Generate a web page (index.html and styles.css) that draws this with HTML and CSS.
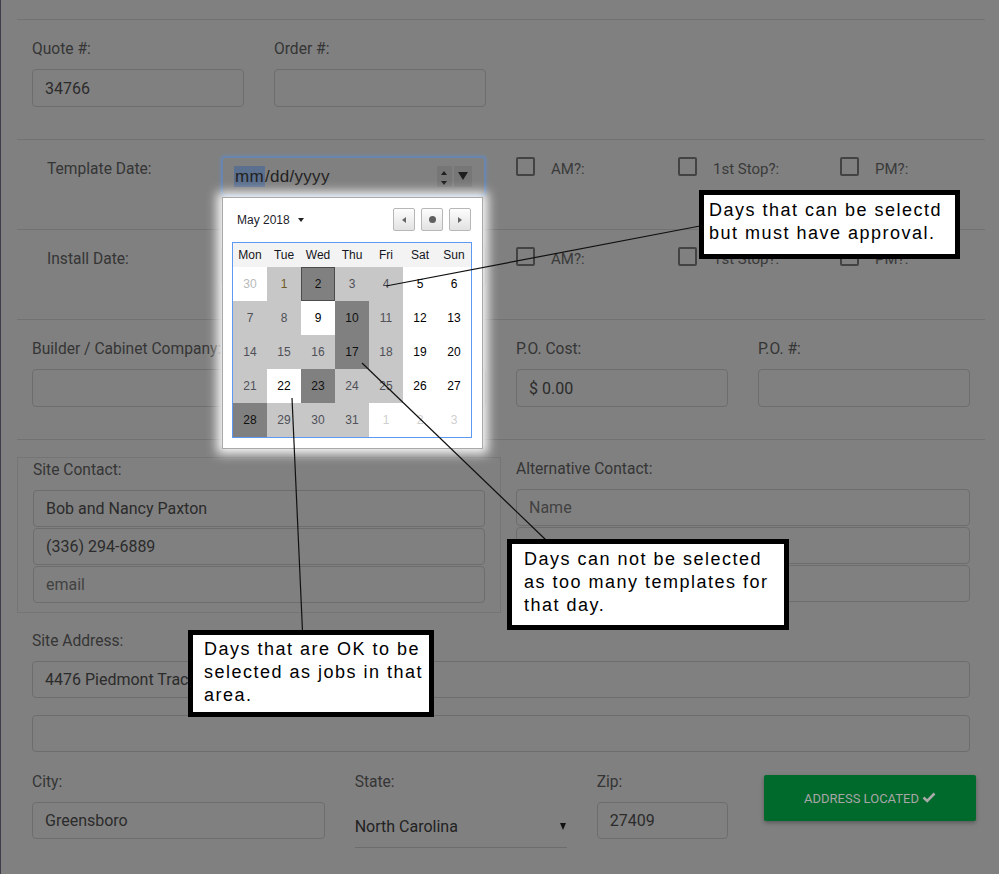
FILE: index.html
```html
<!DOCTYPE html>
<html lang="en">
<head>
<meta charset="utf-8">
<title>Template scheduling</title>
<link rel="stylesheet" href="styles.css">
</head>
<body>
<div class="edge"></div>
<main class="page">
  <section class="sec sec-pair">
    <div class="row">
      <div class="col col3">
        <label class="lbl">Quote #:</label>
        <input class="inp" type="text" value="34766">
      </div>
      <div class="col col3">
        <label class="lbl">Order #:</label>
        <input class="inp" type="text" value="">
      </div>
    </div>
  </section>

  <section class="sec sec-date">
    <div class="date-row">
      <span class="date-label">Template Date:</span>
      <div class="date-input focus">
        <span class="dt-text"><span class="dt-sel">mm</span>/dd/yyyy</span>
        <span class="spin"><i class="up"></i><i class="dn"></i></span>
        <span class="drop"><i></i></span>
      </div>
      <div class="checks">
        <div class="check"><span class="box"></span><span class="ck-lbl">AM?:</span></div>
        <div class="check"><span class="box"></span><span class="ck-lbl">1st Stop?:</span></div>
        <div class="check"><span class="box"></span><span class="ck-lbl">PM?:</span></div>
      </div>
    </div>
  </section>

  <section class="sec sec-date">
    <div class="date-row">
      <span class="date-label">Install Date:</span>
      <div class="date-input">
        <span class="dt-text">mm/dd/yyyy</span>
      </div>
      <div class="checks">
        <div class="check"><span class="box"></span><span class="ck-lbl">AM?:</span></div>
        <div class="check"><span class="box"></span><span class="ck-lbl">1st Stop?:</span></div>
        <div class="check"><span class="box"></span><span class="ck-lbl">PM?:</span></div>
      </div>
    </div>
  </section>

  <section class="sec sec-pair">
    <div class="row">
      <div class="col col6">
        <label class="lbl">Builder / Cabinet Company:</label>
        <input class="inp" type="text" value="">
      </div>
      <div class="col col3">
        <label class="lbl">P.O. Cost:</label>
        <input class="inp" type="text" value="$ 0.00">
      </div>
      <div class="col col3">
        <label class="lbl">P.O. #:</label>
        <input class="inp" type="text" value="">
      </div>
    </div>
  </section>

  <section class="sec sec-contact">
    <div class="row">
      <div class="col6 contact-box">
        <label class="lbl">Site Contact:</label>
        <input class="inp stk" type="text" value="Bob and Nancy Paxton">
        <input class="inp stk" type="text" value="(336) 294-6889">
        <input class="inp stk" type="text" placeholder="email">
      </div>
      <div class="col col6 alt-col">
        <label class="lbl">Alternative Contact:</label>
        <input class="inp stk" type="text" placeholder="Name">
        <input class="inp stk" type="text" placeholder="">
        <input class="inp stk" type="text" placeholder="">
      </div>
    </div>

    <div class="addr">
      <label class="lbl">Site Address:</label>
      <input class="inp stk addr1" type="text" value="4476 Piedmont Trace Dr">
      <input class="inp stk" type="text" value="">
    </div>

    <div class="row city-row">
      <div class="col col4">
        <label class="lbl">City:</label>
        <input class="inp stk" type="text" value="Greensboro">
      </div>
      <div class="col col3">
        <label class="lbl">State:</label>
        <div class="select"><span>North Carolina</span><i class="sel-arrow"></i></div>
      </div>
      <div class="col col2">
        <label class="lbl">Zip:</label>
        <input class="inp stk" type="text" value="27409">
      </div>
      <div class="col col3">
        <button class="btn-located" type="button">ADDRESS LOCATED
          <svg class="chk" width="14" height="11" viewBox="0 0 14 11"><path d="M1.5 5.5 L5.2 9 L12.5 1.5" fill="none" stroke="#a9a9a9" stroke-width="2.6"/></svg>
        </button>
      </div>
    </div>
  </section>
</main>

<div class="cal">
  <div class="cal-head">
    <span class="cal-month">May 2018 <i class="caret"></i></span>
    <div class="cal-nav">
      <span class="nb"><i class="tri-l"></i></span>
      <span class="nb"><i class="dot"></i></span>
      <span class="nb"><i class="tri-r"></i></span>
    </div>
  </div>
  <div class="cal-grid">
    <span class="hd">Mon</span><span class="hd">Tue</span><span class="hd">Wed</span><span class="hd">Thu</span><span class="hd">Fri</span><span class="hd">Sat</span><span class="hd">Sun</span>
    <span class="d o o1">30</span><span class="d a today">1</span><span class="d x sel">2</span><span class="d a">3</span><span class="d a">4</span><span class="d ok">5</span><span class="d ok">6</span>
    <span class="d a">7</span><span class="d a">8</span><span class="d ok">9</span><span class="d x">10</span><span class="d a">11</span><span class="d ok">12</span><span class="d ok">13</span>
    <span class="d a">14</span><span class="d a">15</span><span class="d a">16</span><span class="d x">17</span><span class="d a">18</span><span class="d ok">19</span><span class="d ok">20</span>
    <span class="d a">21</span><span class="d ok">22</span><span class="d x">23</span><span class="d a">24</span><span class="d a">25</span><span class="d ok">26</span><span class="d ok">27</span>
    <span class="d x">28</span><span class="d a">29</span><span class="d a">30</span><span class="d a">31</span><span class="d o">1</span><span class="d o">2</span><span class="d o">3</span>
  </div>
</div>

<svg class="pointers" width="999" height="874" viewBox="0 0 999 874">
  <line x1="386" y1="286" x2="700" y2="226" />
  <line x1="362" y1="363" x2="546" y2="540" />
  <line x1="292" y1="398" x2="302.5" y2="631" />
</svg>

<div class="note note1">Days that can be selectd<br>but must have approval.</div>
<div class="note note2">Days can not be selected<br>as too many templates for<br>that day.</div>
<div class="note note3">Days that are OK to be<br>selected as jobs in that<br>area.</div>
</body>
</html>
```

FILE: styles.css
```css
html, body {
  margin: 0;
  padding: 0;
}
body {
  width: 999px;
  height: 874px;
  overflow: hidden;
  position: relative;
  background: #808080;
  font-family: Roboto, "Liberation Sans", sans-serif;
  color: #363636;
}
.edge {
  position: absolute;
  left: 0;
  top: 0;
  width: 1px;
  height: 874px;
  background: #3e3f4a;
}
.page {
  margin-left: 17px;
  width: 968px;
  padding-top: 19px;
}
.sec {
  border-top: 1px solid #727272;
}
.row {
  display: flex;
}
.col {
  box-sizing: border-box;
  padding: 0 15px;
  flex-shrink: 0;
}
.col2 { width: 161.33px; }
.col3 { width: 242px; }
.col4 { width: 322.67px; }
.col6 { width: 484px; flex-shrink: 0; }

.lbl {
  display: block;
  font-size: 15.6px;
  line-height: 20px;
  color: #353535;
  margin-bottom: 10px;
}
.inp {
  display: block;
  box-sizing: border-box;
  width: 100%;
  height: 38px;
  margin: 0;
  padding: 0 12px;
  border: 1px solid #6d6d6d;
  border-radius: 4px;
  background: transparent;
  font-family: Roboto, sans-serif;
  font-size: 16px;
  color: #2b2b2b;
  outline: none;
}
.inp::placeholder {
  color: #424242;
}
.inp.stk {
  height: 37px;
  margin-bottom: 1px;
}

.sec-pair {
  padding: 19px 0 32px;
}

/* date rows */
.sec-date {
  height: 89px;
}
.date-row {
  display: flex;
  align-items: flex-start;
  padding: 16px 0 0 30px;
}
.date-row > * {
  flex-shrink: 0;
}
.date-label {
  width: 174px;
  margin-top: 3px;
  font-size: 15.6px;
  line-height: 20px;
  color: #353535;
}
.date-input {
  box-sizing: border-box;
  width: 265px;
  height: 40px;
  display: flex;
  align-items: center;
  padding: 0 13px 0 12px;
  border: 1px solid #6d6d6d;
  border-radius: 4px;
  font-family: "Liberation Sans", Arial, sans-serif;
  font-size: 17px;
  color: #222;
}
.date-input.focus {
  border: 2px solid #6a86ae;
  padding-left: 11px;
  padding-right: 12px;
  box-shadow: 0 0 3px 1px rgba(110, 140, 180, 0.6);
}
.dt-text {
  letter-spacing: 0.3px;
}
.dt-sel {
  display: inline-block;
  background: #5b6f8e;
  line-height: 21px;
  padding: 0 1px;
}
.spin {
  margin-left: auto;
  width: 15px;
  height: 21px;
  background: #767676;
  position: relative;
}
.spin .up, .spin .dn {
  position: absolute;
  left: 4px;
  width: 0;
  height: 0;
  border-left: 3.5px solid transparent;
  border-right: 3.5px solid transparent;
}
.spin .up { top: 5px; border-bottom: 4px solid #1e1e1e; }
.spin .dn { top: 15px; border-top: 4px solid #1e1e1e; }
.drop {
  margin-left: 2px;
  width: 18px;
  height: 21px;
  background: #777;
  display: flex;
  align-items: center;
  justify-content: center;
}
.drop i {
  width: 0;
  height: 0;
  border-left: 5px solid transparent;
  border-right: 5px solid transparent;
  border-top: 8px solid #1e1e1e;
}
.checks {
  display: flex;
  margin-left: 30px;
}
.check {
  width: 162px;
  flex-shrink: 0;
  display: flex;
  align-items: flex-start;
}
.check:last-child {
  width: 120px;
}
.box {
  box-sizing: border-box;
  width: 19px;
  height: 19px;
  margin-top: 1px;
  border: 2px solid #434343;
  border-radius: 2px;
  flex-shrink: 0;
}
.ck-lbl {
  margin-left: 16px;
  margin-top: 3px;
  font-size: 15px;
  line-height: 20px;
  color: #3a3a3a;
}

/* contact section */
.sec-contact {
  padding-top: 17px;
}
.contact-box {
  box-sizing: border-box;
  border: 1px solid #757575;
  padding: 2px 15px 8px;
}
.alt-col {
  padding-top: 2px;
}
.addr {
  padding: 18px 15px 0;
}
.addr .inp.addr1 {
  margin-bottom: 17px;
}
.city-row {
  padding-top: 19px;
}
.select {
  box-sizing: border-box;
  height: 46px;
  display: flex;
  align-items: center;
  border-bottom: 1px solid #6d6d6d;
  font-size: 16px;
  color: #222;
  padding-top: 3px;
}
.sel-arrow {
  margin-left: auto;
  margin-right: 1px;
  width: 0;
  height: 0;
  border-left: 3.5px solid transparent;
  border-right: 3.5px solid transparent;
  border-top: 7px solid #111;
}
.btn-located {
  display: flex;
  align-items: center;
  justify-content: center;
  gap: 3px;
  width: 212px;
  height: 46px;
  margin: 3px 0 0 6px;
  border: none;
  border-radius: 2px;
  background: #006a2c;
  box-shadow: 0 2px 4px rgba(0, 0, 0, 0.3);
  font-family: Roboto, sans-serif;
  font-size: 13px;
  color: #a6a6a6;
  padding: 0;
}
.chk {
  display: block;
  margin-top: -1px;
}

/* calendar popup */
.cal {
  position: absolute;
  left: 222px;
  top: 197px;
  z-index: 1;
  box-sizing: border-box;
  width: 261px;
  height: 252px;
  padding: 10px 10px 10px 9px;
  background: #fff;
  border: 1px solid #a9a9a9;
  box-shadow: 0 0 10px 5px rgba(255, 255, 255, 0.95);
  font-family: "Liberation Sans", Arial, sans-serif;
  font-size: 12px;
}
.cal-head {
  display: flex;
  align-items: center;
  height: 23px;
  margin-bottom: 11px;
}
.cal-month {
  padding-left: 5px;
  color: #1d1d2b;
  display: flex;
  align-items: center;
}
.caret {
  display: inline-block;
  margin-left: 8px;
  width: 0;
  height: 0;
  border-left: 3.5px solid transparent;
  border-right: 3.5px solid transparent;
  border-top: 4px solid #222;
}
.cal-nav {
  margin-left: auto;
  margin-right: 1px;
  display: flex;
  gap: 6px;
}
.nb {
  box-sizing: border-box;
  width: 22px;
  height: 23px;
  display: flex;
  align-items: center;
  justify-content: center;
  border: 1px solid #b7b7b7;
  border-radius: 2px;
  background: linear-gradient(#fdfdfd, #e2e2e2);
}
.tri-l, .tri-r {
  width: 0;
  height: 0;
  border-top: 3.5px solid transparent;
  border-bottom: 3.5px solid transparent;
}
.tri-l { border-right: 4px solid #666; }
.tri-r { border-left: 4px solid #666; }
.dot {
  width: 7px;
  height: 7px;
  border-radius: 50%;
  background: #5f5f5f;
}
.cal-grid {
  display: grid;
  grid-template-columns: repeat(7, 34px);
  grid-template-rows: 24px repeat(5, 34px);
  border: 1px solid #5b9af0;
  width: 238px;
}
.hd {
  display: flex;
  align-items: center;
  justify-content: center;
  background: #f3f3f3;
  color: #151520;
}
.d {
  display: flex;
  align-items: center;
  justify-content: center;
  box-sizing: border-box;
}
.d.ok { background: #fff; color: #000; }
.d.o { background: #fff; color: #cfcfcf; }
.d.o1 { color: #b9b9b9; }
.d.a { background: #c7c7c7; color: #4f5058; }
.d.x { background: #808080; color: #101010; }
.d.today { color: #6e5a22; }
.d.sel { border: 1px solid #4c4c4c; }

/* pointer lines */
.pointers {
  position: absolute;
  left: 0;
  top: 0;
  z-index: 2;
  pointer-events: none;
}
.pointers line {
  stroke: #111;
  stroke-width: 1.2;
}

/* callouts */
.note {
  position: absolute;
  z-index: 3;
  box-sizing: border-box;
  background: #fff;
  border: 5px solid #000;
  font-family: "Liberation Sans", Arial, sans-serif;
  font-size: 18px;
  line-height: 23px;
  letter-spacing: 1.5px;
  color: #000;
  white-space: nowrap;
}
.note1 {
  left: 699px;
  top: 190px;
  width: 261px;
  height: 69px;
  padding: 4px 0 0 5px;
}
.note2 {
  left: 507px;
  top: 539px;
  width: 282px;
  height: 91px;
  padding: 4px 0 0 12px;
}
.note3 {
  left: 188px;
  top: 630px;
  width: 246px;
  height: 87px;
  padding: 3px 0 0 11px;
}
```
